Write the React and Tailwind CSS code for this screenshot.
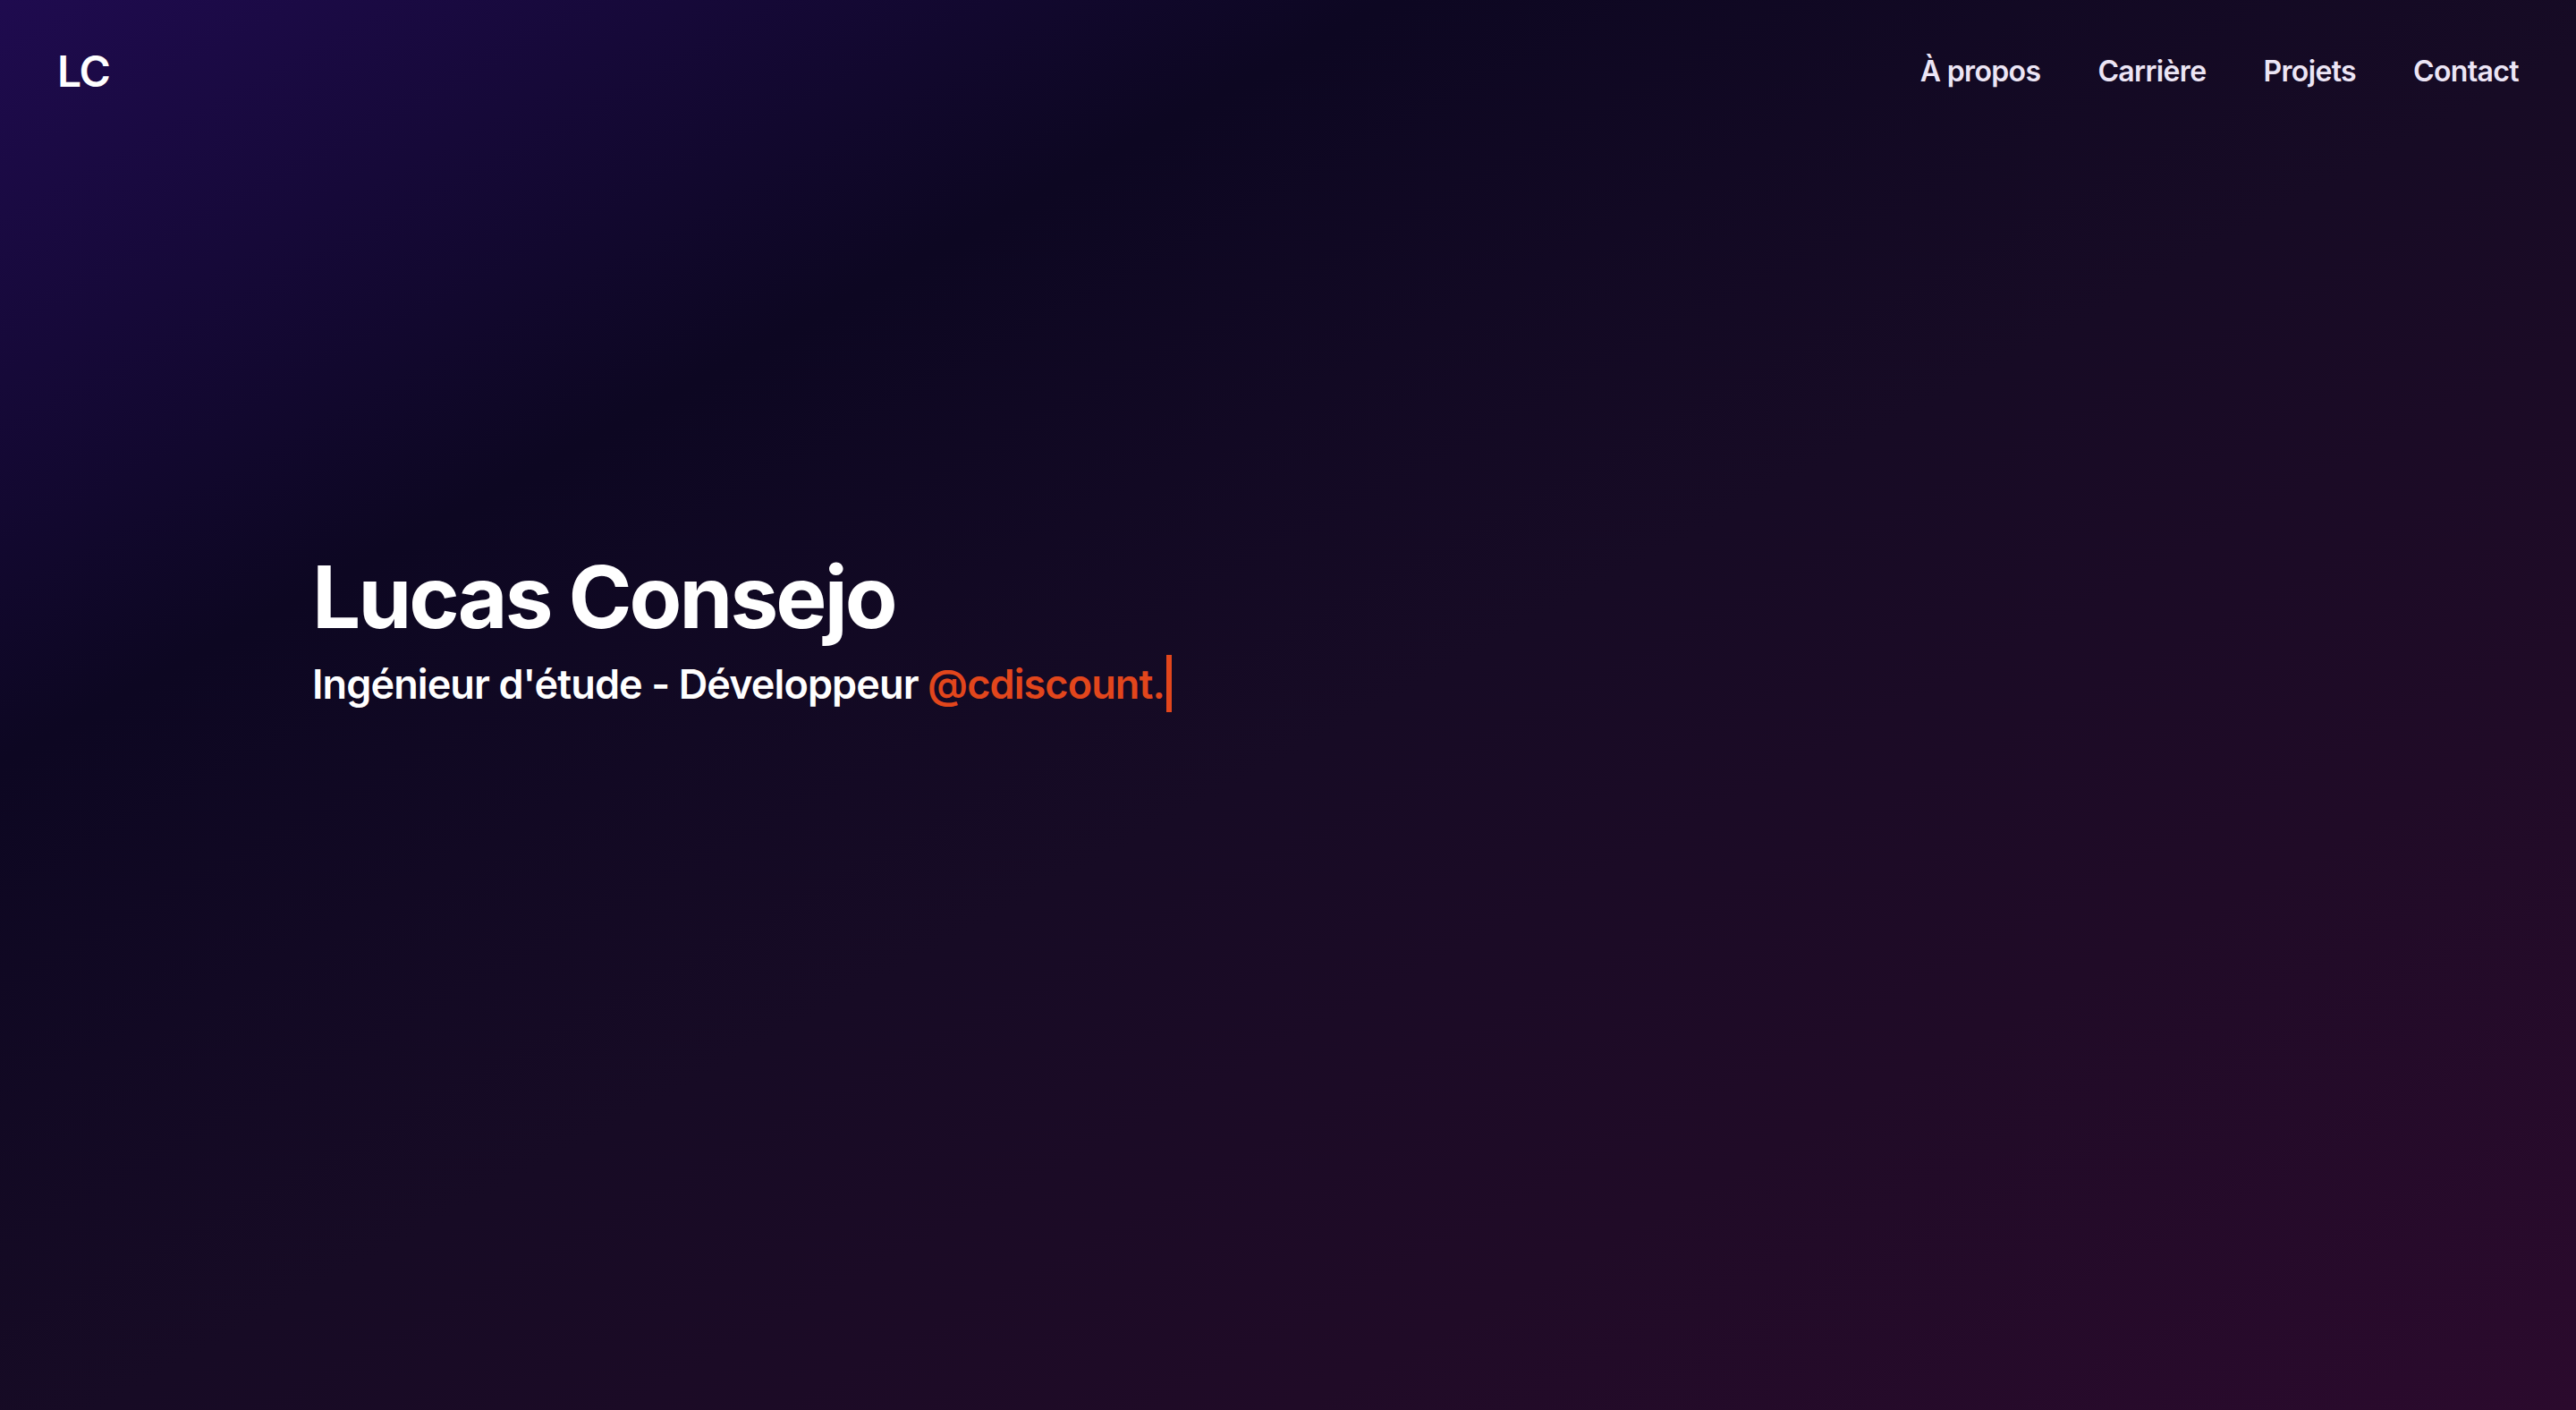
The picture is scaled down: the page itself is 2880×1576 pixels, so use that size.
import React from 'react';

const navLinks = ['À propos', 'Carrière', 'Projets', 'Contact'];

const App = () => {
  return (
    <div
      className="min-h-screen w-full overflow-hidden bg-[linear-gradient(to_bottom_right,#1f0b4f_0%,#0d0722_27%,#170b25_52%,#200b27_75%,#2b0a2d_100%)] text-white"
      style={{ fontFamily: 'Inter, "Noto Sans", sans-serif' }}
    >
      {/* Header */}
      <header className="flex h-40 items-center justify-between px-16">
        <a href="#" className="text-[48px] font-semibold leading-none tracking-tight text-white">
          LC
        </a>
        <nav className="flex items-center gap-16">
          {navLinks.map((link) => (
            <a
              key={link}
              href="#"
              className="text-[32px] font-semibold leading-none tracking-[-0.02em] text-[#ece5f5]"
            >
              {link}
            </a>
          ))}
        </nav>
      </header>

      {/* Hero */}
      <main className="pl-[349px] pt-[459px] pb-40">
        <h1 className="text-[96px] font-bold leading-none tracking-[-0.03em] text-white">
          Lucas Consejo
        </h1>
        <div className="mt-[17px] flex items-center">
          <p className="text-[45px] font-semibold leading-none tracking-[-0.02em] text-white">
            Ingénieur d'étude - Développeur{' '}
            <span className="text-[#e2461c]">@cdiscount.</span>
          </p>
          <span className="ml-[2px] inline-block h-[64px] w-[6px] bg-[#e2461c]" />
        </div>
      </main>
    </div>
  );
};

export default App;
